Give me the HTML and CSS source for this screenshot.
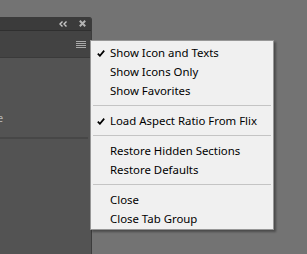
FILE: index.html
```html
<!DOCTYPE html>
<html lang="en">
<head>
<meta charset="UTF-8">
<title>Panel menu</title>
<link rel="stylesheet" href="styles.css">
</head>
<body>
  <div class="panel">
    <div class="panel-tabs">
      <svg class="collapse" width="8" height="6" viewBox="0 0 8 6">
        <path d="M3.5 0.5 L1 3 L3.5 5.5 M7.5 0.5 L5 3 L7.5 5.5" fill="none" stroke="#c8c8c8" stroke-width="1.4"/>
      </svg>
      <svg class="close" width="7" height="7" viewBox="0 0 7 7">
        <path d="M0.8 0.8 L6.2 6.2 M6.2 0.8 L0.8 6.2" fill="none" stroke="#b4b4b4" stroke-width="2"/>
      </svg>
    </div>
    <div class="panel-toolbar">
      <div class="hamburger"><span></span><span></span><span></span><span></span></div>
    </div>
    <div class="panel-body">
      <div class="field"><span class="field-label">Image</span></div>
      <div class="divider"></div>
    </div>
  </div>

  <div class="flyout">
    <div class="item checked">
      <svg class="check" width="8" height="7" viewBox="0 0 8 7"><path d="M0.8 3.6 L2.9 5.8 L7.2 0.6" fill="none" stroke="#000" stroke-width="1.7"/></svg>
      Show Icon and Texts
    </div>
    <div class="item">Show Icons Only</div>
    <div class="item">Show Favorites</div>
    <div class="sep"></div>
    <div class="item checked">
      <svg class="check" width="8" height="7" viewBox="0 0 8 7"><path d="M0.8 3.6 L2.9 5.8 L7.2 0.6" fill="none" stroke="#000" stroke-width="1.7"/></svg>
      Load Aspect Ratio From Flix
    </div>
    <div class="sep"></div>
    <div class="item">Restore Hidden Sections</div>
    <div class="item">Restore Defaults</div>
    <div class="sep"></div>
    <div class="item">Close</div>
    <div class="item">Close Tab Group</div>
  </div>
</body>
</html>
```

FILE: styles.css
```css
body {
margin: 0;
background: #737373;
font-family: "Noto Sans", "Open Sans", sans-serif;
height: 254px;
overflow: hidden;
}

.panel {
margin-top: 17px;
width: 91px;
height: 237px;
background: #535353;
border-right: 1px solid #3c3c3c;
border-top-right-radius: 3px;
display: flex;
flex-direction: column;
overflow: hidden;
}

.panel-tabs {
height: 13px;
background: #3b3b3b;
border-bottom: 1px solid #2f2f2f;
display: flex;
align-items: center;
justify-content: flex-end;
gap: 12px;
padding-right: 5px;
}

.panel-toolbar {
height: 26px;
background: #434343;
border-bottom: 1px solid #3a3a3a;
display: flex;
justify-content: flex-end;
padding-right: 5px;
}

.hamburger {
margin-top: 10px;
width: 10px;
display: flex;
flex-direction: column;
gap: 1px;
}
.hamburger span {
height: 1px;
background: #a9a9a9;
}

.panel-body {
flex: 1;
}

.field {
margin-top: 53px;
height: 14px;
}
.field-label {
display: block;
margin-left: -30px;
color: #b5b5b5;
font-size: 11px;
line-height: 14px;
}

.divider {
margin-top: 12px;
height: 2px;
background: #474747;
margin-right: 3px;
}

.flyout {
position: absolute;
left: 90px;
top: 40px;
width: 182px;
padding: 2px 0 1px;
background: #f0f0f0;
border: 1px solid #979797;
box-shadow: 2px 2px 2px rgba(0,0,0,0.35);
font-size: 11.4px;
color: #000;
}

.item {
position: relative;
height: 19px;
line-height: 19px;
padding-left: 19px;
white-space: nowrap;
}

.check {
position: absolute;
left: 6px;
top: 7px;
}

.sep {
height: 11px;
display: flex;
align-items: center;
padding: 0 2px;
}
.sep::before {
content: "";
flex: 1;
height: 1px;
background: #c4c4c4;
}
```
